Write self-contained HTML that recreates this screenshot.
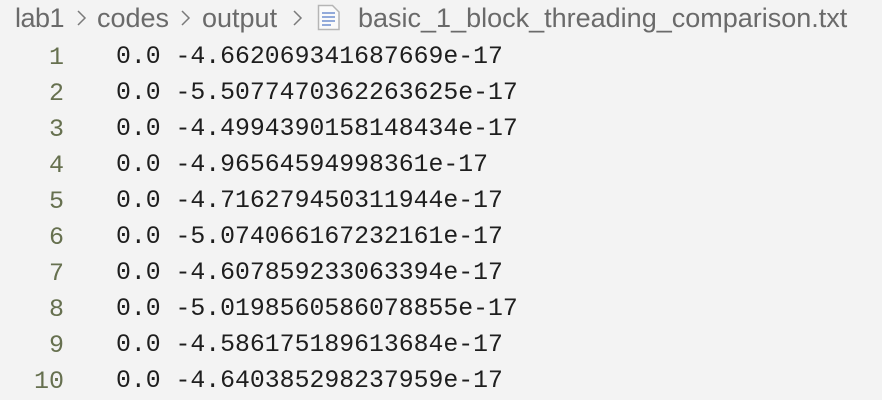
<!DOCTYPE html>
<html><head><style>
html,body{margin:0;padding:0;}
body{width:882px;height:400px;background:#f3f3f3;overflow:hidden;position:relative;font-family:"Liberation Sans",sans-serif;}
.b{position:absolute;top:1px;height:34px;line-height:34px;font-size:27px;color:#6a6a6a;white-space:nowrap;}
.sep{position:absolute;top:6px;}
.ln{position:absolute;left:0;width:64px;text-align:right;font-family:"Liberation Mono",monospace;font-size:25px;color:#66704f;}
.tx{position:absolute;left:116px;font-family:"Liberation Mono",monospace;font-size:24.8px;color:#1e1e1e;white-space:pre;}
</style></head><body>
<div class="b" style="left:15px;letter-spacing:-0.5px">lab1</div>
<svg class="sep" style="left:76px" width="12" height="24" viewBox="0 0 12 24"><path d="M2 5l7 7-7 7" fill="none" stroke="#7a7a7a" stroke-width="1.5"/></svg>
<div class="b" style="left:97px">codes</div>
<svg class="sep" style="left:180px" width="12" height="24" viewBox="0 0 12 24"><path d="M2 5l7 7-7 7" fill="none" stroke="#7a7a7a" stroke-width="1.5"/></svg>
<div class="b" style="left:202px">output</div>
<svg class="sep" style="left:292px" width="12" height="24" viewBox="0 0 12 24"><path d="M2 5l7 7-7 7" fill="none" stroke="#7a7a7a" stroke-width="1.5"/></svg>
<svg style="position:absolute;left:317px;top:4px" width="24" height="27" viewBox="0 0 24 27"><path d="M1.5 1.5h14l6.5 6.5v17.5h-20.5z" fill="#fafafa" stroke="#b5b5b5" stroke-width="1.5"/><path d="M5 9h13M5 13h13M5 17h13M5 21h9" stroke="#6f8fd0" stroke-width="1.6"/></svg>
<div class="b" style="left:358px">basic_1_block_threading_comparison.txt</div>
<div class="ln" style="top:43px">1</div><div class="tx" style="top:43px">0.0 -4.662069341687669e-17</div>
<div class="ln" style="top:79px">2</div><div class="tx" style="top:79px">0.0 -5.5077470362263625e-17</div>
<div class="ln" style="top:115px">3</div><div class="tx" style="top:115px">0.0 -4.4994390158148434e-17</div>
<div class="ln" style="top:151px">4</div><div class="tx" style="top:151px">0.0 -4.96564594998361e-17</div>
<div class="ln" style="top:187px">5</div><div class="tx" style="top:187px">0.0 -4.716279450311944e-17</div>
<div class="ln" style="top:223px">6</div><div class="tx" style="top:223px">0.0 -5.074066167232161e-17</div>
<div class="ln" style="top:259px">7</div><div class="tx" style="top:259px">0.0 -4.607859233063394e-17</div>
<div class="ln" style="top:295px">8</div><div class="tx" style="top:295px">0.0 -5.0198560586078855e-17</div>
<div class="ln" style="top:331px">9</div><div class="tx" style="top:331px">0.0 -4.586175189613684e-17</div>
<div class="ln" style="top:367px">10</div><div class="tx" style="top:367px">0.0 -4.640385298237959e-17</div>
</body></html>
